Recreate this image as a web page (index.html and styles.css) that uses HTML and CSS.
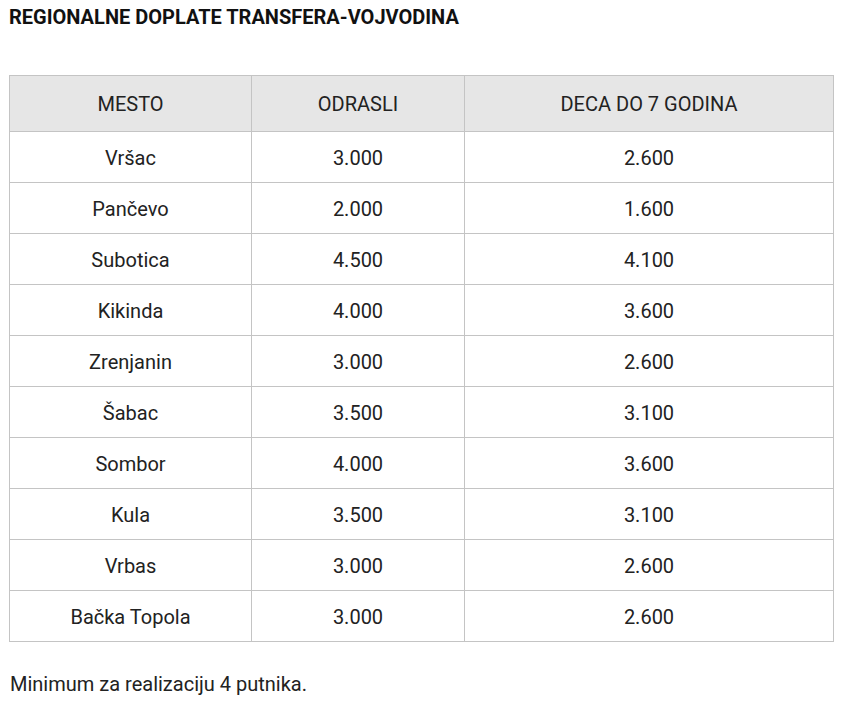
FILE: index.html
```html
<!DOCTYPE html>
<html lang="sr">
<head>
<meta charset="utf-8">
<link rel="stylesheet" href="styles.css">
</head>
<body>
<div class="page">
  <h2 class="title">REGIONALNE DOPLATE TRANSFERA-VOJVODINA</h2>
  <table class="prices">
    <thead>
      <tr><th class="c1">MESTO</th><th class="c2">ODRASLI</th><th class="c3">DECA DO 7 GODINA</th></tr>
    </thead>
    <tbody>
      <tr><td>Vršac</td><td>3.000</td><td>2.600</td></tr>
      <tr><td>Pančevo</td><td>2.000</td><td>1.600</td></tr>
      <tr><td>Subotica</td><td>4.500</td><td>4.100</td></tr>
      <tr><td>Kikinda</td><td>4.000</td><td>3.600</td></tr>
      <tr><td>Zrenjanin</td><td>3.000</td><td>2.600</td></tr>
      <tr><td>Šabac</td><td>3.500</td><td>3.100</td></tr>
      <tr><td>Sombor</td><td>4.000</td><td>3.600</td></tr>
      <tr><td>Kula</td><td>3.500</td><td>3.100</td></tr>
      <tr><td>Vrbas</td><td>3.000</td><td>2.600</td></tr>
      <tr><td>Bačka Topola</td><td>3.000</td><td>2.600</td></tr>
    </tbody>
  </table>
  <p class="note">Minimum za realizaciju 4 putnika.</p>
</div>
</body>
</html>
```
FILE: styles.css
```css
html, body {
  margin: 0;
  padding: 0;
  background: #fff;
}
body {
  font-family: Roboto, "Liberation Sans", sans-serif;
  color: #222;
}
.page {
  padding: 5px 9px 0 9px;
}
.title {
  margin: 0;
  font-size: 20px;
  font-weight: 700;
  line-height: 24px;
  color: #111;
}
.prices {
  margin-top: 46px;
  width: 825px;
  border-collapse: collapse;
  font-size: 20px;
}
.prices th, .prices td {
  border: 1px solid #c4c4c4;
  text-align: center;
  font-weight: 400;
  padding: 0;
}
.prices th {
  background: #e6e6e6;
  height: 55px;
}
.prices td {
  height: 48px;
  padding-top: 2px;
}
.c1 { width: 241px; }
.c2 { width: 212px; }
.note {
  margin: 30px 0 0 1px;
  font-size: 20px;
  line-height: 24px;
}
```
